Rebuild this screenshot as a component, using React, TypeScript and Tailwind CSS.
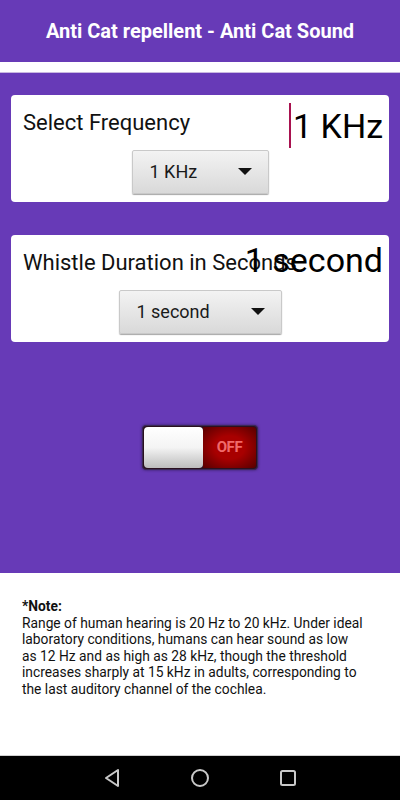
const font = { fontFamily: "Roboto, 'Noto Sans', sans-serif" };

function Caret() {
  return (
    <svg width="14" height="8" viewBox="0 0 14 8">
      <path d="M0 0 H14 L7 7 Z" fill="#111" />
    </svg>
  );
}

function Dropdown({ label, width }: { label: string; width: string }) {
  return (
    <div
      className={`flex h-[44px] ${width} items-center rounded-[2px] border border-[#c9c9c9] bg-gradient-to-b from-[#f3f3f3] to-[#d9d9d9] pl-[17px] pr-[16px] shadow-[0_1px_1px_rgba(0,0,0,0.35)]`}
    >
      <span className="text-[18px] leading-none text-[#1a1a1a]">{label}</span>
      <span className="ml-auto">
        <Caret />
      </span>
    </div>
  );
}

function Card({
  label,
  value,
  dropdown,
  cursor,
}: {
  label: string;
  value: string;
  dropdown: React.ReactNode;
  cursor?: boolean;
}) {
  return (
    <div className="relative mx-[11px] flex flex-col items-center rounded-[4px] bg-white pt-[16px] pb-[8px]">
      <div className="w-full pl-[12px] text-[22px] leading-[24px] text-[#111]">{label}</div>
      <div className="absolute right-[6px] top-[8px] flex items-center">
        {cursor && <span className="mr-[2px] h-[45px] w-[2px] bg-[#a8124f]" />}
        <span className="text-[34px] leading-none text-black">{value}</span>
      </div>
      <div className="mt-[15px]">{dropdown}</div>
    </div>
  );
}

export default function App() {
  return (
    <div className="flex h-[800px] w-[400px] flex-col overflow-hidden bg-white" style={font}>
      <header className="flex h-[62px] items-center justify-center bg-[#673ab7]">
        <h1 className="text-[20px] font-bold text-white">Anti Cat repellent - Anti Cat Sound</h1>
      </header>
      <div className="h-[11px] border-b border-[#c8b8e0] bg-white" />
      <main className="flex h-[500px] flex-col bg-[#673ab7] pt-[22px]">
        <Card
          label="Select Frequency"
          value="1 KHz"
          cursor
          dropdown={<Dropdown label="1 KHz" width="w-[137px]" />}
        />
        <div className="h-[33px]" />
        <Card
          label="Whistle Duration in Seconds"
          value="1 second"
          dropdown={<Dropdown label="1 second" width="w-[163px]" />}
        />
        <div className="mt-[83px] flex justify-center">
          <div className="flex h-[45px] w-[116px] overflow-hidden rounded-[4px] border border-[#3a2a55] bg-[#2a1020] p-[1px] shadow-[0_0_3px_rgba(0,0,0,0.5)]">
            <div className="w-[59px] rounded-[4px] bg-gradient-to-b from-white via-[#f4f4f4] to-[#bdbdbd]" />
            <div className="flex flex-1 items-center justify-center rounded-r-[3px] bg-[radial-gradient(ellipse_at_center,#a80000_40%,#560000_100%)]">
              <span className="text-[15px] font-bold tracking-tight text-[#f06a6a]">OFF</span>
            </div>
          </div>
        </div>
      </main>
      <section className="flex-1 pl-[22px] pr-[34px] pt-[25px] text-[13.8px] leading-[16.6px] text-[#111]">
        <div className="font-bold">*Note:</div>
        <p>
          Range of human hearing is 20 Hz to 20 kHz. Under ideal laboratory conditions, humans can hear
          sound as low as 12 Hz and as high as 28 kHz, though the threshold increases sharply at 15 kHz
          in adults, corresponding to the last auditory channel of the cochlea.
        </p>
      </section>
      <nav className="flex h-[45px] items-center justify-center gap-[66px] border-t border-[#d0d0d0] bg-black">
        <svg width="22" height="22" viewBox="0 0 22 22">
          <path d="M17 3 L5 11 L17 19 Z" fill="none" stroke="#c9c9c9" strokeWidth="2" strokeLinejoin="round" />
        </svg>
        <svg width="22" height="22" viewBox="0 0 22 22">
          <circle cx="11" cy="11" r="8" fill="none" stroke="#c9c9c9" strokeWidth="2" />
        </svg>
        <svg width="22" height="22" viewBox="0 0 22 22">
          <rect x="4" y="4" width="14" height="14" rx="1.5" fill="none" stroke="#c9c9c9" strokeWidth="2" />
        </svg>
      </nav>
    </div>
  );
}
